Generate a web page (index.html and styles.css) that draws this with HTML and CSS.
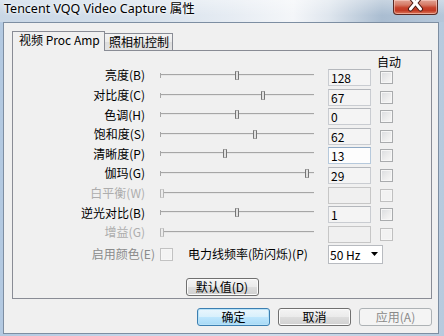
FILE: index.html
```html
<!DOCTYPE html>
<html>
<head>
<meta charset="utf-8">
<link rel="stylesheet" href="styles.css">
</head>
<body>
<div class="window">
  <div class="titlebar">
    <span class="title">Tencent VQQ Video Capture 属性</span>
    <div class="close">
      <svg width="45" height="14" viewBox="0 0 45 14">
        <path d="M17.5 -3 L27.5 9 M27.5 -3 L17.5 9" stroke="#4a1a14" stroke-width="5" stroke-linecap="round"/>
        <path d="M17.5 -3 L27.5 9 M27.5 -3 L17.5 9" stroke="#ffffff" stroke-width="3" stroke-linecap="round"/>
      </svg>
    </div>
  </div>
  <div class="client">
    <div class="tabs">
      <div class="tab active">视频 Proc Amp</div>
      <div class="tab">照相机控制</div>
    </div>
    <div class="panel">
      <div class="auto-head">自动</div>
      <div class="row">
        <span class="lbl">亮度(B)</span>
        <div class="slider"><span class="thumb" style="left:75px"></span></div>
        <div class="box">128</div>
        <span class="check"></span>
      </div>
      <div class="row">
        <span class="lbl">对比度(C)</span>
        <div class="slider"><span class="thumb" style="left:101px"></span></div>
        <div class="box">67</div>
        <span class="check"></span>
      </div>
      <div class="row">
        <span class="lbl">色调(H)</span>
        <div class="slider"><span class="thumb" style="left:75px"></span></div>
        <div class="box">0</div>
        <span class="check"></span>
      </div>
      <div class="row">
        <span class="lbl">饱和度(S)</span>
        <div class="slider"><span class="thumb" style="left:93px"></span></div>
        <div class="box">62</div>
        <span class="check"></span>
      </div>
      <div class="row">
        <span class="lbl">清晰度(P)</span>
        <div class="slider"><span class="thumb" style="left:63px"></span></div>
        <div class="box focus">13</div>
        <span class="check"></span>
      </div>
      <div class="row">
        <span class="lbl">伽玛(G)</span>
        <div class="slider"><span class="thumb" style="left:145px"></span></div>
        <div class="box">29</div>
        <span class="check"></span>
      </div>
      <div class="row disabled">
        <span class="lbl">白平衡(W)</span>
        <div class="slider"><span class="thumb" style="left:0px"></span></div>
        <div class="box"></div>
        <span class="check"></span>
      </div>
      <div class="row">
        <span class="lbl">逆光对比(B)</span>
        <div class="slider"><span class="thumb" style="left:75px"></span></div>
        <div class="box">1</div>
        <span class="check"></span>
      </div>
      <div class="row disabled">
        <span class="lbl">增益(G)</span>
        <div class="slider"><span class="thumb" style="left:0px"></span></div>
        <div class="box"></div>
        <span class="check"></span>
      </div>
      <div class="row last">
        <span class="lbl wide dim">启用颜色(E)</span>
        <span class="check small dimcheck"></span>
        <span class="freq">电力线频率(防闪烁)(P)</span>
        <div class="combo">
          <span>50 Hz</span>
          <svg width="7" height="4" viewBox="0 0 7 4"><path d="M0 0 H7 L3.5 4 Z" fill="#000"/></svg>
        </div>
      </div>
      <div class="defaults"><button class="btn">默认值(D)</button></div>
    </div>
    <div class="buttons">
      <button class="btn default">确定</button>
      <button class="btn">取消</button>
      <button class="btn off">应用(A)</button>
    </div>
  </div>
</div>
</body>
</html>
```

FILE: styles.css
```css
* { box-sizing: border-box; margin: 0; padding: 0; }
html, body { width: 444px; height: 336px; overflow: hidden; }
body {
  font-family: "Noto Sans CJK SC", sans-serif;
  font-size: 12px;
  color: #000;
}
.window {
  width: 444px;
  height: 336px;
  display: flex;
  flex-direction: column;
  background: linear-gradient(90deg, #b3c9e1 0%, #c5d6e9 30%, #cfdcea 60%, #b7cade 100%);
}
.titlebar {
  flex: none;
  height: 22px;
  display: flex;
  justify-content: space-between;
  align-items: flex-start;
  padding-left: 4px;
  background:
    linear-gradient(180deg, rgba(255,255,255,0.35), rgba(255,255,255,0) 70%),
    linear-gradient(90deg, #c9d7e6 0%, #d5e0eb 30%, #e6ecf3 52%, #f4f6f9 66%, #dfe6ee 74%, #aabdd1 86%, #b5c7da 100%);
}
.title {
  font-family: "Noto Sans", "Noto Sans CJK SC", sans-serif;
  font-size: 12.5px;
  line-height: 16px;
  padding-top: 1px;
  text-shadow: 0 0 5px #fff, 0 0 3px #fff;
}
.close {
  width: 45px;
  height: 15px;
  margin-right: 6px;
  border: 1px solid #5b2a24;
  border-top: none;
  border-radius: 0 0 4px 4px;
  background: linear-gradient(180deg, #e2a394 0%, #d57a66 35%, #c7432c 55%, #c23a24 75%, #dc7a5e 100%);
  box-shadow: inset 0 0 0 1px rgba(255,220,210,0.5);
  overflow: hidden;
}
.close svg { display: block; margin-left: -1px; }
.client {
  flex: 1;
  margin: 0 5px 2px 3px;
  border: 1px solid #7d8ea2;
  background: #f0f0f0;
  padding: 8px 6px 0 8px;
  display: flex;
  flex-direction: column;
}
.tabs {
  flex: none;
  height: 20px;
  display: flex;
  align-items: flex-start;
  margin-bottom: -1px;
  position: relative;
  z-index: 1;
}
.tab {
  width: 69px;
  height: 17px;
  margin-top: 2px;
  margin-left: -1px;
  padding-left: 4px;
  border: 1px solid #898c95;
  border-bottom: none;
  line-height: 16px;
  white-space: nowrap;
  background: linear-gradient(180deg, #f3f3f3 0%, #ebebeb 50%, #dddddd 51%, #e4e4e4 100%);
}
.tab.active {
  width: 93px;
  height: 20px;
  margin-top: 0;
  margin-left: 0;
  padding-left: 6px;
  background: #f0f0f0;
}
.panel {
  flex: 1;
  border: 1px solid #898c95;
  background: #f0f0f0;
  display: flex;
  flex-direction: column;
}
.auto-head {
  height: 16.7px;
  padding: 3px 0 0 364px;
  line-height: 16px;
  white-space: nowrap;
}
.row {
  height: 19.6px;
  display: flex;
  align-items: center;
  flex: none;
}
.lbl {
  flex: none;
  width: 132px;
  text-align: right;
  line-height: 16px;
  margin-bottom: 4px;
  white-space: nowrap;
}
.slider {
  flex: none;
  position: relative;
  width: 154px;
  height: 9px;
  margin-left: 15px;
  margin-bottom: 4px;
  background: linear-gradient(180deg, transparent 3px, #a6a6a6 3px, #a6a6a6 4px, #e6e6e6 4px, #e6e6e6 5px, transparent 5px);
}
.slider::before {
  content: "";
  position: absolute;
  left: 0;
  top: 2px;
  width: 1px;
  height: 5px;
  background: #a6a6a6;
}
.thumb {
  position: absolute;
  top: 0;
  width: 4px;
  height: 9px;
  border-left: 1px solid #757575;
  border-right: 1px solid #757575;
  border-top: 1px solid #a8a8a8;
  border-bottom: 1px solid #a8a8a8;
  background: #e2e2e2;
}
.box {
  flex: none;
  width: 43px;
  height: 17px;
  margin-left: 14px;
  border: 1px solid #c9ccd1;
  border-top-color: #b4b7bc;
  background: #f4f4f4;
  padding-left: 2px;
  line-height: 15px;
}
.box.focus {
  background: #fdfdfd;
  border-color: #b6c9dc;
  border-top-color: #8fa9c4;
}
.check {
  flex: none;
  width: 13px;
  height: 13px;
  margin-left: 9px;
  border: 1px solid #a9abad;
  background: linear-gradient(135deg, #dadcdf 0%, #eeeeee 60%, #f8f8f8 100%);
  box-shadow: inset 0 0 0 1px #f6f6f6;
}
.row.disabled .lbl { color: #adadad; }
.row.disabled .thumb {
  border-left-color: #b5b5b5;
  border-right-color: #b5b5b5;
  border-top-color: #cfcfcf;
  border-bottom-color: #cfcfcf;
  background: #ececec;
}
.row.disabled .box { background: #f0f0f0; border-color: #c6c6c6; }
.row.disabled .check { border-color: #c0c0c0; background: #f2f2f2; }
.row.last { height: 20px; }
.lbl.wide { width: 142px; margin-bottom: 0; }
.lbl.dim { color: #8a8a8a; }
.check.small { margin-left: 5px; }
.check.dimcheck { border-color: #c2c2c2; background: #f3f3f3; }
.freq {
  flex: none;
  width: 140px;
  margin-left: 15px;
  line-height: 16px;
  white-space: nowrap;
}
.combo {
  flex: none;
  width: 55px;
  height: 19px;
  border: 1px solid #b8bbc0;
  background: #ffffff;
  padding: 0 4px 0 1px;
  display: flex;
  justify-content: space-between;
  align-items: center;
  line-height: 17px;
}
.combo svg { display: block; }
.defaults {
  flex: none;
  display: flex;
  justify-content: center;
  margin-top: 14px;
}
.btn {
  flex: none;
  width: 73px;
  height: 18px;
  border: 1px solid #707070;
  border-radius: 3px;
  background: linear-gradient(180deg, #f4f4f4 0%, #ebebeb 48%, #dddddd 52%, #d0d0d0 100%);
  box-shadow: inset 0 0 0 1px #fbfbfb;
  font-family: "Noto Sans CJK SC", sans-serif;
  font-size: 12px;
  line-height: 16px;
  color: #000;
  padding: 0;
}
.btn.default {
  border-color: #3c7fb1;
  background: linear-gradient(180deg, #eaf6fd 0%, #d9f0fc 48%, #bee6fd 52%, #a7d9f5 100%);
  box-shadow: inset 0 0 0 1px #b8e2f8;
}
.btn.off {
  border-color: #adb2b5;
  background: #f4f4f4;
  box-shadow: none;
  color: #8a8a8a;
}
.buttons {
  flex: none;
  display: flex;
  justify-content: flex-end;
  gap: 8px;
  margin-top: 9px;
  padding-bottom: 7px;
}
```
